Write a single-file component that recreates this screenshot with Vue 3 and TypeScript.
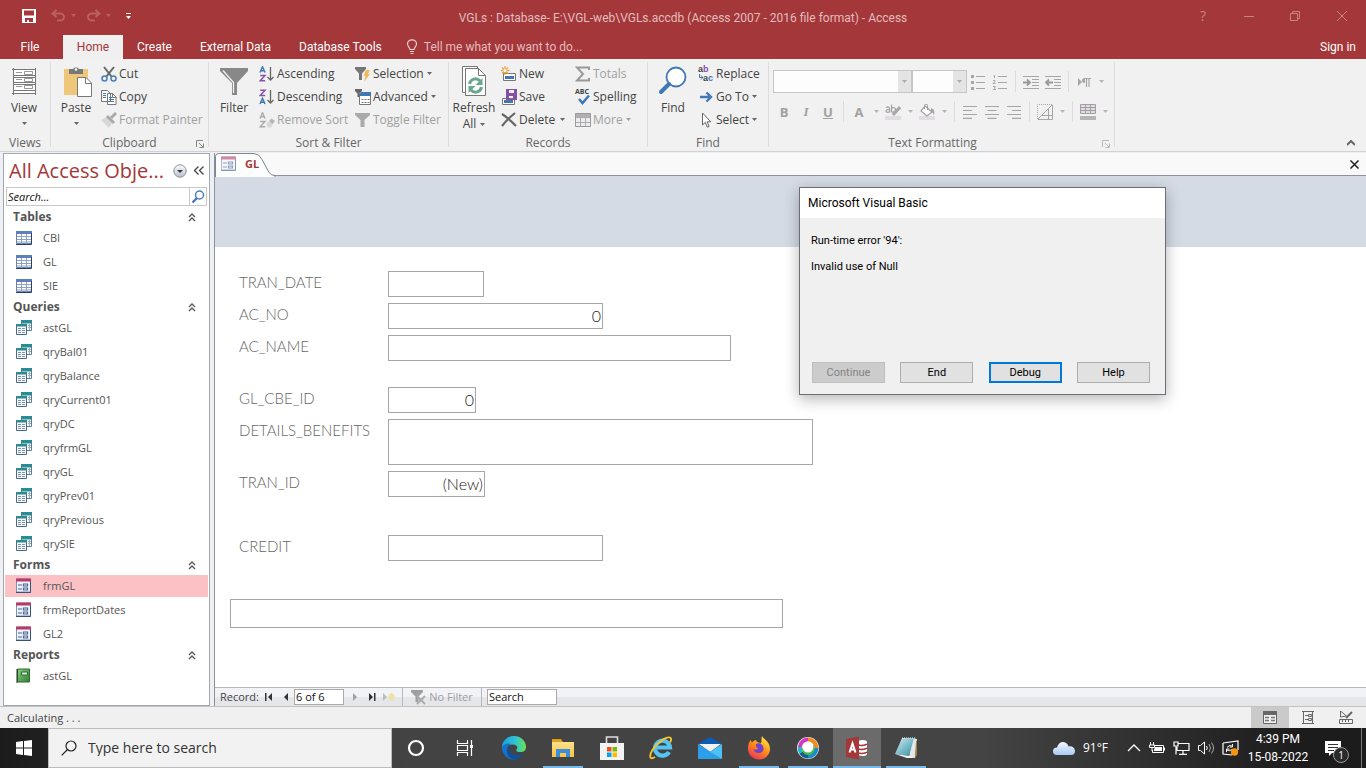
<script setup lang="ts">
interface NavGroup {
  title: string
  icon: string
  items: string[]
}

interface Field {
  id: string
  label: string
  value: string
  size: string
  multiline?: boolean
}

interface TaskItem {
  icon: string
  name: string
  running?: boolean
  active?: boolean
}

const tabs: string[] = ['Create', 'External Data', 'Database Tools']

const navGroups: NavGroup[] = [
  { title: 'Tables', icon: 'nav-table', items: ['CBI', 'GL', 'SIE'] },
  {
    title: 'Queries',
    icon: 'nav-query',
    items: ['astGL', 'qryBal01', 'qryBalance', 'qryCurrent01', 'qryDC', 'qryfrmGL', 'qryGL', 'qryPrev01', 'qryPrevious', 'qrySIE'],
  },
  { title: 'Forms', icon: 'nav-form', items: ['frmGL', 'frmReportDates', 'GL2'] },
  { title: 'Reports', icon: 'nav-report', items: ['astGL'] },
]

const fields: Field[] = [
  { id: 'tran-date', label: 'TRAN_DATE', value: '', size: 'date' },
  { id: 'ac-no', label: 'AC_NO', value: '0', size: 'number' },
  { id: 'ac-name', label: 'AC_NAME', value: '', size: 'name' },
  { id: 'gl-cbe-id', label: 'GL_CBE_ID', value: '0', size: 'short' },
  { id: 'details', label: 'DETAILS_BENEFITS', value: '', size: 'memo', multiline: true },
  { id: 'tran-id', label: 'TRAN_ID', value: '(New)', size: 'auto' },
  { id: 'credit', label: 'CREDIT', value: '', size: 'credit' },
]

const taskItems: TaskItem[] = [
  { icon: 'cortana', name: 'Cortana' },
  { icon: 'taskview', name: 'Task View' },
  { icon: 'edge', name: 'Edge' },
  { icon: 'explorer', name: 'File Explorer', running: true },
  { icon: 'store', name: 'Store' },
  { icon: 'ie', name: 'Internet Explorer' },
  { icon: 'mail', name: 'Mail' },
  { icon: 'firefox', name: 'Firefox', running: true },
  { icon: 'webex', name: 'Webex', running: true },
  { icon: 'access', name: 'Access', running: true, active: true },
  { icon: 'notepad', name: 'Notepad', running: true },
]

const isSelected = (group: string, item: string): boolean => group === 'Forms' && item === 'frmGL'
</script>

<template>
  <div class="window">
    <svg class="sprite" aria-hidden="true">
      <defs>
        <linearGradient id="g-edge" x1="0" y1="0" x2="1" y2="0">
          <stop offset="0" stop-color="#1b9de2" /><stop offset="0.55" stop-color="#2fc3d8" /><stop offset="1" stop-color="#6be24a" />
        </linearGradient>
        <linearGradient id="g-fox" x1="0.8" y1="0" x2="0.2" y2="1">
          <stop offset="0" stop-color="#fff04a" /><stop offset="0.5" stop-color="#ff8a16" /><stop offset="1" stop-color="#e9305c" />
        </linearGradient>
        <linearGradient id="g-folder" x1="0" y1="0" x2="0" y2="1">
          <stop offset="0" stop-color="#ffe08a" /><stop offset="1" stop-color="#f7c342" />
        </linearGradient>
        <linearGradient id="g-pad" x1="0" y1="0" x2="1" y2="1">
          <stop offset="0" stop-color="#d4eef3" /><stop offset="1" stop-color="#2f8ea3" />
        </linearGradient>
        <linearGradient id="g-cloud" x1="0" y1="0" x2="0" y2="1">
          <stop offset="0" stop-color="#f3f8ff" /><stop offset="1" stop-color="#a9c9f5" />
        </linearGradient>
        <linearGradient id="g-ball" x1="0" y1="0" x2="0" y2="1">
          <stop offset="0" stop-color="#ffffff" /><stop offset="1" stop-color="#b9bec8" />
        </linearGradient>
        <linearGradient id="g-report" x1="0" y1="0" x2="1" y2="1">
          <stop offset="0" stop-color="#8ccf84" /><stop offset="1" stop-color="#2f7d33" />
        </linearGradient>
      </defs>
      <symbol id="arrow" viewBox="0 0 5 3"><path d="M0 0h5L2.500 3z" fill="currentColor" /></symbol>
      <symbol id="launcher" viewBox="0 0 8 8"><path d="M.5 7V.5H7M3 3l4 4M7.500 3.500v4h-4" fill="none" stroke="currentColor" /></symbol>
      <symbol id="save-title" viewBox="0 0 14 14"><path fill="#fff" fill-rule="evenodd" d="M0 0h14v14H0zM2 1.500v5h10v-5zM3 9v4h2v-2h2v2h4V9z" /></symbol>
      <symbol id="undo" viewBox="0 0 15 13"><path d="M5.500 1 1.500 4.500l4 3.500M2 4.500h7a4 3.500 0 0 1 0 7H6" fill="none" stroke="#bd5f61" stroke-width="2" /></symbol>
      <symbol id="bulb" viewBox="0 0 12 16"><path d="M4 10.500C4 8.500 1.500 7.500 1.500 5a4.500 4.200 0 0 1 9 0c0 2.500-2.500 3.500-2.500 5.500zM4 12.500h4M4.500 14.500h3" fill="none" stroke="#eccfd0" stroke-width="1.200" /></symbol>

      <symbol id="view" viewBox="0 0 32 32">
        <path fill="#fff" d="M5 4h22v24H5z" /><path fill="none" stroke="#777" d="M4 4.500h24M5 10.500h23M5 12.500h23M5 17.500h23M5 19.500h23M5 25.500h23M4 28.500h24M5.500 3v27M27.500 3v27" />
        <path fill="none" stroke="#999" d="M8 7.500h6M8 14.500h6M8 21.500h6M16.500 6.500h8v3h-8zM16.500 13.500h8v3h-8zM16.500 20.500h8v3h-8z" />
      </symbol>
      <symbol id="paste" viewBox="0 0 32 32">
        <path fill="#efc77b" d="M4 4h24v26H4z" /><path fill="#777" d="M9 4h4a3.500 3 0 0 1 6 0h4v5H9z" /><circle cx="16" cy="4.500" r="1.300" fill="#fff" />
        <path fill="#fff" stroke="#777" d="M17.500 12.500h8.500l5.500 5.500v13.500h-14z" /><path fill="none" stroke="#777" d="M25.500 12.500v6h6" />
      </symbol>
      <symbol id="cut" viewBox="0 0 16 16">
        <path d="M3 1l7.500 9.500M13 1 5.500 10.500" stroke="#666" stroke-width="2" fill="none" /><circle cx="3.500" cy="12.500" r="2.500" fill="none" stroke="#4a7fb5" stroke-width="1.500" /><circle cx="12.500" cy="12.500" r="2.500" fill="none" stroke="#4a7fb5" stroke-width="1.500" />
      </symbol>
      <symbol id="copy" viewBox="0 0 16 16">
        <path fill="#fff" stroke="#777" d="M.5 1.500h6l3 3v8h-9zM6.500 4.500h5l3.500 3.500v7.500H6.500z" /><path stroke="#3f78b5" d="M2 4.500h3M2 6.500h3M2 8.500h3M8 8.500h3M8 10.500h5M8 12.500h5" /><path d="M11.500 4.500v4h4" fill="none" stroke="#777" />
      </symbol>
      <symbol id="painter" viewBox="0 0 16 16">
        <path fill="#d9d6d9" d="M0 8l6-3 5 6-3 5z" /><path fill="#aaa" d="M5 5l2-2 7 7-2 2z" /><path d="M10 6l5-5" stroke="#aaa" stroke-width="3" />
      </symbol>
      <symbol id="filter" viewBox="0 0 32 32">
        <path fill="#888" d="M2 3h28v3L19 18v12h-5V18L2 6z" /><path fill="none" stroke="#f5f5f5" stroke-width="1.200" d="M5 5.500l10.500 12V28" />
      </symbol>
      <symbol id="asc" viewBox="0 0 16 16">
        <path fill="none" stroke="#3f78b5" stroke-width="1.500" d="M1 6.500 3.500.8 6 6.500M2 4.800h3" /><path fill="none" stroke="#8c50ad" stroke-width="1.500" d="M1.200 9.500H6l-4.800 5.300h5" /><path fill="none" stroke="#666" stroke-width="1.300" d="M11.500 1v13M8.500 11l3 3 3-3" />
      </symbol>
      <symbol id="desc" viewBox="0 0 16 16">
        <path fill="none" stroke="#8c50ad" stroke-width="1.500" d="M1.200 1.200H6L1.200 6.500h5" /><path fill="none" stroke="#3f78b5" stroke-width="1.500" d="M1 15l2.500-5.700L6 15M2 13.200h3" /><path fill="none" stroke="#666" stroke-width="1.300" d="M11.500 1v13M8.500 11l3 3 3-3" />
      </symbol>
      <symbol id="unsort" viewBox="0 0 16 16">
        <path fill="none" stroke="#aaa" stroke-width="1.400" d="M1 6.500 3.500.8 6 6.500M2 4.800h3M1.200 9.500H6l-4.800 5.300h5" /><path fill="#d9d6d9" d="M7 12l3-3 4 3.500-2.500 3H9z" /><path fill="#b5b5b5" d="M10 9l2.500-2.500L16 9l-2.500 3z" />
      </symbol>
      <symbol id="selection" viewBox="0 0 16 16">
        <path fill="#777" d="M0 1h11v2L7 7.500V14H4V7.500L0 3z" /><path fill="#efb95d" d="M11 4h4l-2 4h2l-6 8 1.500-6H8.500z" />
      </symbol>
      <symbol id="advanced" viewBox="0 0 16 16">
        <path fill="#fff" stroke="#777" d="M4.500 5.500h11v10h-11z" /><path fill="#3f78b5" d="M6 3h10v4H4V6z" /><path fill="#666" d="M0 0h7v2L4.500 4.500V8h-2V4.500L0 2z" /><path stroke="#777" stroke-dasharray="2 1" d="M6.500 10.500h8M6.500 13.500h8" />
      </symbol>
      <symbol id="toggle" viewBox="0 0 16 16"><path fill="#aaa" d="M0 1h15v2L9.500 8v7h-4V8L0 3z" /></symbol>
      <symbol id="refresh" viewBox="0 0 32 32">
        <path fill="#fff" stroke="#777" d="M4.500 1.500h15v26h-15z" /><path fill="#fff" stroke="#777" d="M7.500 3.500h13l7 7v20h-20z" /><path fill="none" stroke="#777" d="M20.500 3.500v7h7" />
        <path fill="none" stroke="#68a78e" stroke-width="3" d="M11.500 19a6 6 0 0 1 10.500-3M23.500 22a6 6 0 0 1-10.500 3" /><path fill="#68a78e" d="M24.500 13v7h-7zM10.500 28v-7h7z" />
      </symbol>
      <symbol id="new" viewBox="0 0 16 16">
        <path fill="#fff" stroke="#777" d="M2.500 7.500h12v7h-12z" /><path fill="#3f78b5" d="M4 10h9v3H4z" /><path stroke="#e9a94a" stroke-width="1.300" d="M4 0v9M-.5 4.500h9M1 1.500l6 6M7 1.500l-6 6" /><circle cx="4" cy="4.500" r="1.500" fill="#fff" />
      </symbol>
      <symbol id="save" viewBox="0 0 16 16">
        <path fill="#fff" stroke="#777" d="M1.500 9.500h12v6h-12z" /><path fill="#3f78b5" d="M3 11h9v3H3z" /><path fill="#8650a8" fill-rule="evenodd" d="M5 0h11v11H5zM8 1v3h5V1zM8 7v3h4V7z" />
      </symbol>
      <symbol id="delete" viewBox="0 0 16 16"><path d="M1 2c5 3 9 7 14 12M14 1C9 5 5 9 1 14" fill="none" stroke="#666" stroke-width="2.200" /></symbol>
      <symbol id="totals" viewBox="0 0 16 16"><path d="M14 4V1.500H2L8 8l-6 6.500h12V12" fill="none" stroke="#999" stroke-width="2" /></symbol>
      <symbol id="check" viewBox="0 0 16 16"><path d="M4 10l3.500 4L14 6.500" fill="none" stroke="#3f78b5" stroke-width="2.500" /></symbol>
      <symbol id="more" viewBox="0 0 16 16"><path fill="#ececec" stroke="#999" d="M.5 1.500h15v13H.5z" /><path fill="#b5aeb5" d="M1 2h14v3H1z" /><path fill="none" stroke="#b0a9b0" d="M1 5.500h14M1 10.500h14M5.500 2v12M10.500 2v12" /></symbol>
      <symbol id="find" viewBox="0 0 32 32"><circle cx="19" cy="12" r="9.500" fill="#fff" stroke="#3f78b5" stroke-width="1.800" /><path d="M12 19 4 27" stroke="#3f78b5" stroke-width="4" stroke-linecap="round" /></symbol>
      <symbol id="goto" viewBox="0 0 16 16"><path fill="none" stroke="#3f78b5" stroke-width="2.400" d="M2 8h10M8.500 3.500 13 8l-4.500 4.500" /></symbol>
      <symbol id="select" viewBox="0 0 16 16"><path fill="#fff" stroke="#666" d="M4.500 1v12l2.800-2.600 2 4.800 1.800-.8-2-4.600h3.700z" /></symbol>
      <symbol id="turn" viewBox="0 0 4 6"><path fill="none" stroke="#3f78b5" d="M.5 0v3.500H4M2 1.500l2 2-2 2" /></symbol>
      <symbol id="bullets" viewBox="0 0 16 16"><path stroke="#a6a6a6" stroke-width="1.200" d="M6 2.500h9M6 8.500h9M6 14.500h9" /><path fill="#a6a6a6" d="M1 1h3v3H1zM1 7h3v3H1zM1 13h3v3H1z" /></symbol>
      <symbol id="numbers" viewBox="0 0 16 16"><path fill="none" stroke="#a6a6a6" d="M6 2.500h9M6 8.500h9M6 14.500h9M1.500 1.500h1V4M1 6.500h2v1l-2 2h2.500M1 12.500h2.500l-1 1.500 1 1.500H1" /></symbol>
      <symbol id="indent" viewBox="0 0 16 16"><path stroke="#a6a6a6" d="M0 2.500h16M9 5.500h7M9 8.500h7M9 11.500h7M0 14.500h16" /><path fill="none" stroke="#999" stroke-width="1.800" d="M0 8.500h6M4 5.500l3 3-3 3" /></symbol>
      <symbol id="outdent" viewBox="0 0 16 16"><path stroke="#a6a6a6" d="M0 2.500h16M9 5.500h7M9 8.500h7M9 11.500h7M0 14.500h16" /><path fill="none" stroke="#999" stroke-width="1.800" d="M8 8.500H2M4 5.500l-3 3 3 3" /></symbol>
      <symbol id="para" viewBox="0 0 16 16"><path fill="#a6a6a6" d="M2 4l4 4-4 4zM9 9a3 2.500 0 0 1 0-5h6v1H9z" /><path stroke="#a6a6a6" stroke-width="1.200" d="M10.500 4v9M13 4v9" /></symbol>
      <symbol id="highlight" viewBox="0 0 16 16"><path fill="#e3dbe3" d="M0 12h16v4H0z" /><path fill="none" stroke="#a0a0a0" stroke-width="1.200" d="M1 3.500c2-1 3.500-.5 3.500 1v3.500c-1.500.5-3.500.5-3.500-1s2-1.500 3.500-1.500M6.500.5v7.500c3 .5 4-1 4-2.500s-2-2.500-4-1.500" /><path stroke="#a6a6a6" stroke-width="3" d="M15 3 8 11" /></symbol>
      <symbol id="fill" viewBox="0 0 16 16"><path fill="#e3dbe3" d="M0 12h16v4H0z" /><path fill="#fff" stroke="#a0a0a0" stroke-width="1.200" d="M6 2l7 6-5 4-6-5z" /><path fill="none" stroke="#a0a0a0" d="M5.500 5V1.500a1.500 1.500 0 0 1 3 0V6" /><path fill="#a6a6a6" d="M12 4c3 1 4 3 3 7-1-2-2-3-3-3z" /></symbol>
      <symbol id="left" viewBox="0 0 16 14"><path stroke="#a6a6a6" stroke-width="1.200" d="M1 1.500h14M1 5.500h9M1 9.500h14M1 13.300h9" /></symbol>
      <symbol id="center" viewBox="0 0 16 14"><path stroke="#a6a6a6" stroke-width="1.200" d="M1 1.500h14M3.500 5.500h9M1 9.500h14M3.500 13.300h9" /></symbol>
      <symbol id="right" viewBox="0 0 16 14"><path stroke="#a6a6a6" stroke-width="1.200" d="M1 1.500h14M6 5.500h9M1 9.500h14M6 13.300h9" /></symbol>
      <symbol id="gridlines" viewBox="0 0 16 16"><path fill="none" stroke="#a6a6a6" d="M1 15.500h14.500V1M1 15 15 1M11.500 5v10M5 11.500h10" /><path fill="none" stroke="#a6a6a6" stroke-dasharray="1 1" d="M.5 15V.5H15" /></symbol>
      <symbol id="rows" viewBox="0 0 16 16"><path fill="#e3dbe3" stroke="#a0a0a0" d="M.5.5h15v9H.5z" /><path stroke="#a0a0a0" d="M1 3.500h14M1 6.500h14M5.500 1v8M10.500 1v8" /><path fill="#b5b5b5" d="M0 12h16v4H0z" /></symbol>

      <symbol id="nav-table" viewBox="0 0 16 14"><path fill="#fff" stroke="#6d83a8" d="M.5.5h15v12H.5z" /><path fill="#5c7fc0" d="M0 0h16v3H0z" /><path stroke="#8ea2c2" d="M1 5.500h14M1 8.500h14M1 11h14M5.500 3v10M10.500 3v10" /><path fill="none" stroke="#2b4166" d="M0 13.500h15.500V2" /></symbol>
      <symbol id="nav-query" viewBox="0 0 16 16"><path fill="#fff" stroke="#5c7f96" d="M5.500.5h10v10h-10z" /><path fill="#2a8b91" d="M5 0h11v3.500H5z" /><path stroke="#9db2c8" d="M12 5.500h3M12 7.500h3M13.500 4v6" /><path fill="#f6fafd" stroke="#49697f" d="M.5 4.500h10v10H.5z" /><path fill="#2a8b91" d="M0 4h11v2.500H0z" /><path stroke="#7e96b5" stroke-dasharray="3 1" d="M2 8.500h8M2 10.500h8M2 12.500h8" /></symbol>
      <symbol id="nav-form" viewBox="0 0 16 15"><path fill="#edf2fb" stroke="#7d8fb5" d="M.5.500h14v13H.5z" /><path fill="#b83a68" d="M0 0h15v3H0z" /><path fill="none" stroke="#4d6594" stroke-width="1.200" d="M2 6.500h4M2 10.500h4M7.500 5.500h4v2h-4zM7.500 9.500h4v2h-4z" /><path fill="none" stroke="#38517d" d="M0 14h14.500V3" /></symbol>
      <symbol id="nav-report" viewBox="0 0 16 15"><path fill="url(#g-report)" stroke="#2c6b30" d="M1.500.5h12v13h-12z" /><path stroke="#1d3320" stroke-width="2" stroke-dasharray="1 1" d="M1 1v13" /><path fill="#d7efd2" stroke="#2c6b30" d="M5.500 3.500h6v3h-6z" /></symbol>
      <symbol id="chevrons-up" viewBox="0 0 8 9"><path fill="none" stroke="#555" stroke-width="1.300" d="M1 4l3-3 3 3M1 8l3-3 3 3" /></symbol>
      <symbol id="magnify" viewBox="0 0 14 14"><circle cx="8.500" cy="5" r="4" fill="#fff" stroke="#4a7fc0" stroke-width="1.500" /><path d="M6 8 1.500 12.500" stroke="#3f6fb0" stroke-width="2.200" /></symbol>
      <symbol id="first" viewBox="0 0 8 8"><path fill="currentColor" d="M0 0h1.500v8H0zM7 0v8L3 4z" /></symbol>
      <symbol id="prev" viewBox="0 0 8 8"><path fill="currentColor" d="M6 0v8L2 4z" /></symbol>
      <symbol id="next" viewBox="0 0 8 8"><path fill="currentColor" d="M2 0v8l4-4z" /></symbol>
      <symbol id="last" viewBox="0 0 8 8"><path fill="currentColor" d="M6 0h1.500v8H6zM1 0v8l4-4z" /></symbol>
      <symbol id="newrec" viewBox="0 0 12 8"><path fill="#bbb" d="M0 0v8l4-4z" /><path stroke="#efdfa5" stroke-width="1.500" d="M5 4h7M8.500 0v8M6 1l5 6M11 1 6 7" /></symbol>
      <symbol id="nofilter" viewBox="0 0 16 16"><path fill="#a0a0a0" d="M0 1h12v2L7.500 7.500V13h-3V7.500L0 3z" /><path stroke="#aaa" stroke-width="1.800" d="M6 7l8 8M14 7l-8 8" /></symbol>
      <symbol id="formview" viewBox="0 0 14 13"><path fill="#eee" stroke="#666" d="M.5.5h13v12H.5z" /><path fill="#666" d="M0 0h14v4H0z" /><path stroke="#777" stroke-width="1.500" d="M2 6.500h4M2 9.500h4M8 6.500h4M8 9.500h4" /></symbol>
      <symbol id="layoutview" viewBox="0 0 14 13"><path fill="none" stroke="#666" d="M1 .5h12M1 12.500h12M2.500 0v13M11.500 0v13M4 4.500h3M4 8.500h3M7.500 3.500h3v2h-3zM7.500 7.500h3v2h-3z" /></symbol>
      <symbol id="designview" viewBox="0 0 14 13"><path fill="none" stroke="#666" d="M1.500 0v6l6-1zM.5 8.500h13v4H.5zM3.500 9v2M6.500 9v2M9.500 9v2" /><path stroke="#666" stroke-width="2" d="M13 1 7 7" /></symbol>

      <symbol id="windows" viewBox="0 0 16 16"><path fill="#fff" d="M0 2l7-1v6.500H0zM8 .9 16 0v7.500H8zM0 8.500h7V15l-7-1zM8 8.500h8V16l-8-1z" /></symbol>
      <symbol id="search" viewBox="0 0 16 16"><circle cx="10" cy="6" r="5" fill="none" stroke="#222" stroke-width="1.200" /><path d="M6.500 9.500.7 15.300" stroke="#222" stroke-width="1.200" /></symbol>
      <symbol id="cortana" viewBox="0 0 24 24"><circle cx="12" cy="12" r="7" fill="none" stroke="#fff" stroke-width="2.200" /></symbol>
      <symbol id="taskview" viewBox="0 0 24 24"><path fill="none" stroke="#fff" stroke-width="1.200" d="M4.500 4v3.500h10V4M4.500 20v-3.500h10V20M4.500 9.500h10v5h-10zM18.500 4v5M18.500 12v8" /><path fill="#fff" d="M17 9h3v3h-3z" /></symbol>
      <symbol id="edge" viewBox="0 0 24 24"><path fill="url(#g-edge)" d="M0 11a12 11 0 0 1 24 0c0 4-3 5.500-7 5-2.500-.3-3.500-1.500-2-3.500 1-1.500-.5-4-4-4C6 8.500 2 10 0 13z" /><path fill="#1672c8" d="M0 12c1-4 5-5.500 9-4-3 1-4 3.500-4 6 0 4 4 8 9 9.500A12 12 0 0 1 0 12z" /><path fill="#0f4f9c" d="M8 10c-2 4 0 9 6 9 3 0 5-.8 7-1.700-2 4-6 6.700-10 6.400C6 22 4 17 6 12z" /></symbol>
      <symbol id="explorer" viewBox="0 0 24 24"><path fill="#d99a15" d="M1 3h9l2 3H1z" /><path fill="url(#g-folder)" d="M1 6h22v15H1z" /><path fill="#e5a823" d="M1 4h9v1.500H1z" /><path fill="#3b8edb" d="M5 13h14v8h-4v-4H9v4H5z" /></symbol>
      <symbol id="store" viewBox="0 0 24 24"><path fill="none" stroke="#ddd" stroke-width="1.600" d="M6.500 7V1h11v6" /><path fill="#f3f3f3" d="M0 7h24v17H0z" /><path fill="#f25022" d="M7 11h4.500v4.500H7z" /><path fill="#7fba00" d="M12.500 11H17v4.500h-4.500z" /><path fill="#00a4ef" d="M7 16.500h4.500V21H7z" /><path fill="#ffb900" d="M12.500 16.500H17V21h-4.500z" /></symbol>
      <symbol id="ie" viewBox="0 0 24 24"><path fill="none" stroke="#56c4f2" stroke-width="4.200" d="M20 16a7.500 7.500 0 1 1 1-4.500H7" /><path fill="none" stroke="#f6c52a" stroke-width="1.800" d="M6 21C0 25 0 19 4 13C8 7 17 0 21 1.500c2 1 1 3.500 0 5" /></symbol>
      <symbol id="mail" viewBox="0 0 24 24"><path fill="#0a5cb4" d="M0 8l12-7 12 7z" /><path fill="#f1f1f1" d="M1 8h22l-11 8z" /><path fill="#2b9fe8" d="M0 8l24 15H0z" /><path fill="#4cc0f7" d="M24 8v15L12 16z" /></symbol>
      <symbol id="firefox" viewBox="0 0 24 24"><path fill="url(#g-fox)" d="M15 0c1 3 8 5 8 13a11 10.500 0 0 1-22 0c0-4 1-7 2.500-9L5 6.500C6 5 8 4 9 4c0 2 3 3 5 3 1-2 0-5 1-7z" /><path fill="#7242c8" d="M9 8c3-2 7 0 7.500 4 .5 3-2 5-5 5s-5-2-5-4c2 1 4 .5 5-1-2 0-3-2-2.500-4z" /></symbol>
      <symbol id="webex" viewBox="0 0 24 24"><circle cx="12" cy="12" r="11" fill="#e8e8e8" /><g fill="none" stroke-width="4"><path stroke="#f28a22" d="M12 3.500a8.500 8.500 0 0 1 8.500 8.500" /><path stroke="#168bd0" d="M20.500 12a8.500 8.500 0 0 1-8.500 8.500" /><path stroke="#165f8a" d="M12 20.500a8.500 8.500 0 0 1-7-4" /><path stroke="#19b8c4" d="M5 16.500a8 8 0 0 1-1-6" /><path stroke="#d934c4" d="M4 11a8 8 0 0 1 8-7.500" /></g><path fill="#46b84d" d="M6 12a6.500 6.500 0 1 0 12-3z" /><circle cx="12" cy="11" r="5.500" fill="#fff" /></symbol>
      <symbol id="access" viewBox="0 0 24 24"><path fill="#fff" d="M13 5c4-2 9-1 9 1v12c0 2-5 3-9 1z" /><path stroke="#a4373a" stroke-width="1.500" fill="none" d="M13 9c4 1 8 0 9-1M13 13c4 1 8 0 9-1M13 17c4 1 8 0 9-1" /><path fill="#a4373a" d="M1 3l13-2.500v23L1 21z" /><path fill="none" stroke="#fff" stroke-width="2" d="M4.500 16.500 7.500 7.500l3 9M5.500 13.500h4" /></symbol>
      <symbol id="notepad" viewBox="0 0 24 24"><path fill="#e4e7ea" d="M18 2l5 1-2 19-6-1z" /><path fill="#a8843a" d="M22 5l1 0v14l-2 3z" /><path fill="url(#g-pad)" d="M8 2h12l-5 18-14-2z" /><path fill="#f6f6f6" d="M1 18l14 2 6 2-8 0z" /><path stroke="#eee" stroke-dasharray="1 1" d="M8 2h13" /></symbol>
      <symbol id="cloud" viewBox="0 0 22 14"><path fill="url(#g-cloud)" d="M4 14a4 3.700 0 0 1 0-7.500C5 2 9 0 12 1.500c2 .8 3 2 3.500 4C19 4.500 22 7 22 10s-2 4-4 4z" /></symbol>
      <symbol id="up" viewBox="0 0 14 8"><path d="M1 7l6-6 6 6" fill="none" stroke="#fff" stroke-width="1.300" /></symbol>
      <symbol id="battery" viewBox="0 0 16 12"><path fill="none" stroke="#fff" d="M6 3.500h8.500v7H3.500V8M15.500 5.500v3M1.500 0v3M4.500 0v3M.5 3v2.500h5V3zM3 6v3" /><path fill="#fff" d="M6 5h7v4H5V7l1-1z" /></symbol>
      <symbol id="network" viewBox="0 0 17 14"><path fill="none" stroke="#fff" stroke-width="1.200" d="M5 2.500h11v7H4V6M10 10v3M6 13.300h8M1 1h4v4H1zM3 5v8.500" /></symbol>
      <symbol id="speaker" viewBox="0 0 16 14"><path fill="none" stroke="#fff" d="M.5 4.500h2L6.500 1v12l-4-3.500h-2zM8.500 5q1.500 2 0 4" /><path fill="none" stroke="#aaa" d="M11 3q3 4 0 8M13.500 1.500q4 5.500 0 11" /></symbol>
      <symbol id="update" viewBox="0 0 17 16"><path fill="none" stroke="#fff" stroke-width="1.200" d="M1 3 16 1v9M1 3v11l9 1" /><path fill="none" stroke="#fff" d="M5 7.500q2-3 5-1.500M10.500 4v3h-3M10 9.500q-2 2-5 .5M4.500 12V9h3" /><circle cx="12.500" cy="12" r="3.700" fill="#f7930f" /></symbol>
      <symbol id="notify" viewBox="0 0 16 15"><path fill="#fff" d="M0 0h16v12H7l-3 3v-3H0z" /><path stroke="#333" d="M3 3.500h10M3 6.500h10M3 9.500h6" /></symbol>
    </svg>

    <header class="titlebar">
      <div class="quick">
        <button aria-label="Save file"><svg class="i14"><use href="#save-title" /></svg></button>
        <button class="dim" aria-label="Undo" disabled><svg class="undo"><use href="#undo" /></svg><svg class="arrow"><use href="#arrow" /></svg></button>
        <button class="dim" aria-label="Redo" disabled><svg class="undo flip"><use href="#undo" /></svg><svg class="arrow"><use href="#arrow" /></svg></button>
        <button class="customize" aria-label="Customize toolbar"><svg width="5" height="6" viewBox="0 0 5 6"><path fill="#fff" d="M0 0h5v1H0zM0 3h5L2.500 6z" /></svg></button>
      </div>
      <h1>VGLs : Database- E:\VGL-web\VGLs.accdb (Access 2007 - 2016 file format) - Access</h1>
      <div class="caption">
        <button>?</button>
        <button aria-label="Minimize"><svg viewBox="0 0 10 10"><path d="M0 5.500h10" /></svg></button>
        <button aria-label="Restore"><svg viewBox="0 0 10 10"><path d="M.5 2.500h7v7h-7zM2.500 2V.5h7v7H8" /></svg></button>
        <button aria-label="Close window"><svg viewBox="0 0 10 10"><path d="M0 0l10 10M10 0 0 10" /></svg></button>
      </div>
    </header>

    <nav class="tabs">
      <button class="file">File</button>
      <button class="active">Home</button>
      <button v-for="tab in tabs" :key="tab">{{ tab }}</button>
      <button class="tell"><svg class="bulb"><use href="#bulb" /></svg>Tell me what you want to do...</button>
      <button class="signin">Sign in</button>
    </nav>

    <section class="ribbon">
      <div class="group views">
        <div class="body"><button class="big"><svg><use href="#view" /></svg><span>View</span><svg class="arrow"><use href="#arrow" /></svg></button></div>
        <div class="caption-row">Views</div>
      </div>
      <div class="group clipboard">
        <div class="body">
          <button class="big"><svg><use href="#paste" /></svg><span>Paste</span><svg class="arrow"><use href="#arrow" /></svg></button>
          <div class="stack">
            <button><svg class="i16"><use href="#cut" /></svg>Cut</button>
            <button><svg class="i16"><use href="#copy" /></svg>Copy</button>
            <button disabled><svg class="i16"><use href="#painter" /></svg>Format Painter</button>
          </div>
        </div>
        <div class="caption-row">Clipboard<svg class="launcher"><use href="#launcher" /></svg></div>
      </div>
      <div class="group sort">
        <div class="body">
          <button class="big"><svg><use href="#filter" /></svg><span>Filter</span></button>
          <div class="stack first">
            <button><svg class="i16"><use href="#asc" /></svg>Ascending</button>
            <button><svg class="i16"><use href="#desc" /></svg>Descending</button>
            <button disabled><svg class="i16"><use href="#unsort" /></svg>Remove Sort</button>
          </div>
          <div class="stack">
            <button><svg class="i16"><use href="#selection" /></svg>Selection<svg class="arrow"><use href="#arrow" /></svg></button>
            <button><svg class="i16"><use href="#advanced" /></svg>Advanced<svg class="arrow"><use href="#arrow" /></svg></button>
            <button disabled><svg class="i16"><use href="#toggle" /></svg>Toggle Filter</button>
          </div>
        </div>
        <div class="caption-row">Sort &amp; Filter</div>
      </div>
      <div class="group records">
        <div class="body">
          <button class="big"><svg><use href="#refresh" /></svg><span>Refresh</span><span class="line2">All<svg class="arrow"><use href="#arrow" /></svg></span></button>
          <div class="stack first">
            <button><svg class="i16"><use href="#new" /></svg>New</button>
            <button><svg class="i16"><use href="#save" /></svg>Save</button>
            <button class="spread"><svg class="i16"><use href="#delete" /></svg>Delete<svg class="arrow"><use href="#arrow" /></svg></button>
          </div>
          <div class="stack">
            <button disabled><svg class="i16"><use href="#totals" /></svg>Totals</button>
            <button><span class="abc"><svg class="i16"><use href="#check" /></svg><i>ABC</i></span>Spelling</button>
            <button disabled><svg class="i16"><use href="#more" /></svg>More<svg class="arrow"><use href="#arrow" /></svg></button>
          </div>
        </div>
        <div class="caption-row">Records</div>
      </div>
      <div class="group find">
        <div class="body">
          <button class="big"><svg><use href="#find" /></svg><span>Find</span></button>
          <div class="stack">
            <button><span class="abac"><i>a<b>b</b></i><i class="second"><svg width="4" height="6"><use href="#turn" /></svg>a<b class="blue">c</b></i></span>Replace</button>
            <button><svg class="i16"><use href="#goto" /></svg>Go To<svg class="arrow"><use href="#arrow" /></svg></button>
            <button><svg class="i16"><use href="#select" /></svg>Select<svg class="arrow"><use href="#arrow" /></svg></button>
          </div>
        </div>
        <div class="caption-row">Find</div>
      </div>
      <div class="group text">
        <div class="format">
          <div class="frow">
            <span class="combo wide"><select aria-label="Font" disabled></select><svg class="arrow"><use href="#arrow" /></svg></span>
            <span class="combo"><select aria-label="Font size" disabled></select><svg class="arrow"><use href="#arrow" /></svg></span>
            <button class="sq" disabled aria-label="Bullets"><svg class="i16"><use href="#bullets" /></svg></button>
            <button class="sq" disabled aria-label="Numbering"><svg class="i16"><use href="#numbers" /></svg></button>
            <span class="sep"></span>
            <button class="sq" disabled aria-label="Increase indent"><svg class="i16"><use href="#indent" /></svg></button>
            <button class="sq" disabled aria-label="Decrease indent"><svg class="i16"><use href="#outdent" /></svg></button>
            <span class="sep"></span>
            <button class="drop" disabled aria-label="Direction"><svg class="i16"><use href="#para" /></svg><svg class="arrow"><use href="#arrow" /></svg></button>
          </div>
          <div class="frow">
            <button class="sq letter" disabled>B</button>
            <button class="sq letter ital" disabled>I</button>
            <button class="sq letter under" disabled>U</button>
            <span class="sep"></span>
            <button class="drop letter" disabled><span class="glyph">A</span><svg class="arrow"><use href="#arrow" /></svg></button>
            <button class="drop" disabled aria-label="Highlight"><svg class="i16"><use href="#highlight" /></svg><svg class="arrow"><use href="#arrow" /></svg></button>
            <button class="drop" disabled aria-label="Fill"><svg class="i16"><use href="#fill" /></svg><svg class="arrow"><use href="#arrow" /></svg></button>
            <span class="sep"></span>
            <button class="sq" disabled aria-label="Align left"><svg class="align"><use href="#left" /></svg></button>
            <button class="sq" disabled aria-label="Center"><svg class="align"><use href="#center" /></svg></button>
            <button class="sq" disabled aria-label="Align right"><svg class="align"><use href="#right" /></svg></button>
            <span class="sep"></span>
            <button class="drop" disabled aria-label="Gridlines"><svg class="i16"><use href="#gridlines" /></svg><svg class="arrow"><use href="#arrow" /></svg></button>
            <span class="sep"></span>
            <button class="drop" disabled aria-label="Row colour"><svg class="i16"><use href="#rows" /></svg><svg class="arrow"><use href="#arrow" /></svg></button>
          </div>
        </div>
        <div class="caption-row text-caption">Text Formatting<svg class="launcher faint"><use href="#launcher" /></svg></div>
      </div>
      <button class="collapse" aria-label="Collapse ribbon"><svg width="8" height="6" viewBox="0 0 8 6"><path d="M0 5l4-4 4 4" fill="none" stroke="#666" stroke-width="2" /></svg></button>
    </section>

    <main class="workspace">
      <aside class="navpane">
        <div class="navhead">
          <h2>All Access Obje...</h2>
          <button aria-label="Choose category"><svg width="14" height="14" viewBox="0 0 14 14"><circle cx="7" cy="7" r="6.200" fill="url(#g-ball)" stroke="#8a8f9a" /><path d="M4 6h6L7 9z" fill="#334" /></svg></button>
          <button aria-label="Collapse pane"><svg width="10" height="9" viewBox="0 0 10 9"><path d="M4.500.5l-4 4 4 4M9.500.5l-4 4 4 4" fill="none" stroke="#444" stroke-width="1.300" /></svg></button>
        </div>
        <div class="navsearch">
          <input type="text" placeholder="Search..." aria-label="Search objects" />
          <button aria-label="Search"><svg class="i14"><use href="#magnify" /></svg></button>
        </div>
        <section v-for="group in navGroups" :key="group.title">
          <h3>{{ group.title }}<svg class="chev"><use href="#chevrons-up" /></svg></h3>
          <ul>
            <li v-for="item in group.items" :key="item" :class="{ selected: isSelected(group.title, item) }">
              <svg class="i16"><use :href="'#' + group.icon" /></svg>{{ item }}
            </li>
          </ul>
        </section>
      </aside>

      <section class="document">
        <div class="doctabs">
          <div class="doctab">
            <svg class="shape" width="62" height="24" viewBox="0 0 62 24"><path fill="#fdfdfd" stroke="#7f868f" d="M.5 24V3.500q0-3 3-3H39q5 0 8 6l7 13q2 3 6 3V24" /></svg>
            <svg class="i16 pale"><use href="#nav-form" /></svg><span>GL</span>
          </div>
          <button class="docclose" aria-label="Close form"><svg width="9" height="9" viewBox="0 0 9 9"><path d="M.5.5l8 8M8.500.5l-8 8" stroke="#222" stroke-width="1.500" /></svg></button>
        </div>
        <div class="band"></div>
        <form class="detail">
          <div v-for="f in fields" :key="f.id" class="field" :class="f.size">
            <label :for="f.id">{{ f.label }}</label>
            <textarea v-if="f.multiline" :id="f.id"></textarea>
            <input v-else :id="f.id" type="text" :value="f.value" />
          </div>
          <input class="footer-box" type="text" aria-label="Remarks" />
        </form>
        <footer class="recordnav">
          <span class="rec">Record:</span>
          <button class="nb" aria-label="First record"><svg><use href="#first" /></svg></button>
          <button class="nb" aria-label="Previous record"><svg><use href="#prev" /></svg></button>
          <input type="text" value="6 of 6" aria-label="Current record" class="pos" />
          <button class="nb off" aria-label="Next record" disabled><svg><use href="#next" /></svg></button>
          <button class="nb" aria-label="Last record"><svg><use href="#last" /></svg></button>
          <button class="nb new" aria-label="New record" disabled><svg><use href="#newrec" /></svg></button>
          <button class="nofilter" disabled><svg class="i16"><use href="#nofilter" /></svg>No Filter</button>
          <input type="text" value="Search" aria-label="Search records" class="find-box" />
        </footer>
      </section>
    </main>

    <div class="status">
      <span>Calculating . . .</span>
      <div class="viewbtns">
        <button class="on" aria-label="Form view"><svg><use href="#formview" /></svg></button>
        <button aria-label="Layout view"><svg><use href="#layoutview" /></svg></button>
        <button aria-label="Design view"><svg><use href="#designview" /></svg></button>
      </div>
    </div>

    <footer class="taskbar">
      <button class="start" aria-label="Start"><svg class="i16"><use href="#windows" /></svg></button>
      <label class="search"><svg class="i16"><use href="#search" /></svg><input type="text" placeholder="Type here to search" aria-label="Type here to search" /></label>
      <div class="apps">
        <button v-for="t in taskItems" :key="t.icon" :class="{ running: t.running, active: t.active }" :aria-label="t.name"><svg><use :href="'#' + t.icon" /></svg></button>
      </div>
      <div class="tray">
        <svg width="22" height="14"><use href="#cloud" /></svg>
        <span class="temp">91°F</span>
        <svg width="14" height="8"><use href="#up" /></svg>
        <svg width="16" height="12"><use href="#battery" /></svg>
        <svg width="17" height="14"><use href="#network" /></svg>
        <svg width="16" height="14"><use href="#speaker" /></svg>
        <svg width="17" height="16"><use href="#update" /></svg>
        <div class="clock"><span>4:39 PM</span><span>15-08-2022</span></div>
        <button class="notify" aria-label="Notifications"><svg width="16" height="15"><use href="#notify" /></svg><span class="badge">1</span></button>
        <span class="peek"></span>
      </div>
    </footer>

    <div class="dialog" role="dialog" aria-labelledby="dlg-title">
      <h2 id="dlg-title">Microsoft Visual Basic</h2>
      <div class="dlg-body">
        <p>Run-time error '94':</p>
        <p>Invalid use of Null</p>
        <div class="dlg-actions">
          <button disabled>Continue</button>
          <button>End</button>
          <button class="default">Debug</button>
          <button>Help</button>
        </div>
      </div>
    </div>
  </div>
</template>

<style>
body {
  margin: 0;
}
</style>

<style scoped>
.window {
  position: relative;
  min-height: 100vh;
  display: flex;
  flex-direction: column;
  background: #f0f0f0;
  color: #444;
  font: 12px/16px "Open Sans", "Noto Sans", sans-serif;
}
.window * {
  box-sizing: border-box;
}
.sprite {
  position: absolute;
  width: 0;
  height: 0;
}
button {
  display: flex;
  align-items: center;
  justify-content: center;
  padding: 0;
  border: 0;
  background: none;
  color: inherit;
  font: inherit;
  white-space: nowrap;
}
input,
textarea,
select {
  font: inherit;
  border-radius: 0;
  outline: 0;
}
h1,
h2,
h3,
p,
ul {
  margin: 0;
  padding: 0;
  font-weight: 400;
}
svg {
  flex: none;
}
.i14 {
  width: 14px;
  height: 14px;
}
.i16 {
  width: 16px;
  height: 16px;
}
.arrow {
  width: 5px;
  height: 3px;
  color: #666;
}

/* title bar and ribbon tabs */
.titlebar {
  display: flex;
  justify-content: space-between;
  height: 35px;
  background: #a4373a;
  color: #e3bcbd;
  position: relative;
}
.quick {
  display: flex;
  align-items: center;
  gap: 15px;
  padding: 0 0 4px 22px;
}
.quick .dim {
  gap: 5px;
}
.quick .dim .arrow {
  color: #bd5f61;
}
.quick .dim + .dim {
  margin-left: -5px;
}
.undo {
  width: 15px;
  height: 13px;
}
.flip {
  transform: scaleX(-1);
}
h1 {
  position: absolute;
  inset: 0;
  text-align: center;
  font-family: Roboto, sans-serif;
  font-size: 12px;
  line-height: 36px;
  pointer-events: none;
}
.caption {
  display: flex;
  padding: 0 12px 4px 0;
}
.caption button {
  width: 46px;
  color: #c98385;
  font-size: 14px;
}
.caption button:last-child {
  width: 24px;
  margin-left: 12px;
}
.caption svg {
  width: 10px;
  height: 10px;
  fill: none;
  stroke: #c98385;
}
.tabs {
  display: flex;
  height: 24px;
  background: #a4373a;
  color: #fff;
  font-family: Roboto, sans-serif;
}
.tabs button {
  padding: 0 14px;
  font-size: 12px;
}
.tabs .file {
  width: 60px;
  margin-right: 3px;
}
.tabs .active {
  width: 60px;
  background: #f0f0f0;
  color: #a4373a;
}
.tabs .tell {
  padding: 0 10px;
  gap: 6px;
  color: #e3bcbd;
}
.bulb {
  width: 12px;
  height: 16px;
}
.tabs .signin {
  margin-left: auto;
  padding: 0 10px;
}

/* ribbon */
.ribbon {
  display: flex;
  height: 93px;
  padding-top: 3px;
  border-bottom: 1px solid #d2d2d2;
  background: #f1f1f1;
}
.group {
  display: flex;
  flex-direction: column;
  margin-bottom: 4px;
  border-right: 1px solid #dcdcdc;
}
.views {
  width: 51px;
}
.clipboard {
  width: 158px;
}
.sort {
  width: 240px;
}
.records {
  width: 199px;
}
.find {
  width: 121px;
}
.text {
  width: 346px;
}
.body {
  flex: none;
  display: flex;
  height: 73px;
}
.big {
  flex-direction: column;
  justify-content: flex-start;
  align-self: flex-start;
  width: 48px;
  padding-top: 3px;
}
.big > svg:first-child {
  width: 32px;
  height: 32px;
  margin-bottom: 3px;
}
.big > .arrow {
  margin-top: 6px;
}
.line2 {
  display: flex;
  align-items: center;
  gap: 4px;
}
.clipboard .big,
.sort .big,
.records .big,
.find .big {
  width: 50px;
}
.stack {
  display: flex;
  flex-direction: column;
}
.stack button {
  justify-content: flex-start;
  height: 23px;
  gap: 2px;
}
.stack .arrow {
  margin-left: 1px;
}
button:disabled,
button:disabled .arrow {
  color: #a0a0a0;
}
.sort .stack.first {
  width: 96px;
}
.records .stack {
  padding-left: 2px;
}
.records .stack.first {
  width: 74px;
}
.records .spread .arrow {
  margin-left: auto;
  margin-right: 8px;
}
.caption-row {
  flex: none;
  position: relative;
  text-align: center;
  color: #666;
}
.text-caption {
  padding-right: 18px;
}
.launcher {
  position: absolute;
  right: 4px;
  top: 5px;
  width: 8px;
  height: 8px;
  color: #888;
}
.faint {
  color: #bbb;
}
.abc,
.abac {
  position: relative;
  display: block;
  width: 16px;
  height: 16px;
}
.abc i,
.abac i {
  font-style: normal;
}
.abc i {
  position: absolute;
  left: 0;
  top: 0;
  font-size: 7px;
  font-weight: 700;
  line-height: 5px;
}
.abac {
  height: 18px;
  font: 600 9px/9px "Liberation Sans", sans-serif;
}
.abac i {
  display: flex;
}
.abac b {
  color: #8650a8;
}
.abac .second {
  padding-left: 1px;
}
.abac .blue {
  color: #3f78b5;
}
.format {
  flex: none;
  display: flex;
  flex-direction: column;
  height: 73px;
  padding: 8px 0 0 4px;
  gap: 7px;
}
.frow {
  display: flex;
  align-items: center;
  height: 23px;
}
.combo {
  position: relative;
  width: 55px;
  height: 23px;
}
.combo.wide {
  width: 139px;
}
.combo select {
  width: 100%;
  height: 100%;
  border: 1px solid #c6c6c6;
  background: linear-gradient(to left, #e4e4e4 13px, #fdfdfd 13px);
  appearance: none;
  opacity: 1;
}
.combo .arrow {
  position: absolute;
  right: 5px;
  top: 10px;
  color: #aaa;
}
.sq {
  width: 22px;
}
.drop {
  width: 34px;
  gap: 7px;
}
.drop:disabled .arrow {
  color: #b5b5b5;
}
.letter {
  font-size: 13px;
  font-weight: 700;
}
.glyph {
  width: 16px;
}
.ital {
  font-family: "Liberation Serif", serif;
  font-style: italic;
}
.under {
  text-decoration: underline;
}
.align {
  width: 16px;
  height: 14px;
}
.sep {
  width: 1px;
  height: 21px;
  margin: 0 4px;
  background: #dcdcdc;
}
.collapse {
  align-self: flex-end;
  margin: 0 11px 5px auto;
}

/* navigation pane */
.workspace {
  flex: 1;
  display: flex;
  gap: 4px;
  padding: 1px 0 0 3px;
  background: #eef0f3;
}
.navpane {
  width: 207px;
  border: 1px solid #a2a8b0;
  background: #fff;
}
.navhead {
  display: flex;
  align-items: center;
  height: 33px;
  padding: 0 5px;
  gap: 7px;
}
.navhead h2 {
  flex: 1;
  color: #a4373a;
  font-size: 20px;
  line-height: 32px;
  white-space: nowrap;
}
.navsearch {
  display: flex;
  height: 19px;
  margin: 0 2px 2px;
  border: 1px solid #c8c8c8;
}
.navsearch input {
  flex: 1;
  min-width: 0;
  padding: 0 1px;
  border: 0;
  font-size: 11px;
  font-style: italic;
}
.navsearch input::placeholder {
  color: #111;
}
.navsearch button {
  width: 17px;
  border-left: 1px solid #c8c8c8;
}
h3 {
  display: flex;
  align-items: center;
  justify-content: space-between;
  height: 18px;
  padding: 0 13px 0 9px;
  font-size: 12px;
  font-weight: 700;
  color: #555;
}
.chev {
  width: 8px;
  height: 9px;
}
ul {
  display: flex;
  flex-direction: column;
  gap: 2px;
  padding: 1px;
  list-style: none;
}
li {
  display: flex;
  align-items: center;
  gap: 11px;
  height: 22px;
  padding-left: 11px;
  font-size: 11px;
  color: #555;
}
li.selected {
  background: #fcc1c4;
}

/* document area */
.document {
  flex: 1;
  display: flex;
  flex-direction: column;
  min-width: 0;
  border-left: 1px solid #8b929b;
  background: #fff;
}
.doctabs {
  display: flex;
  justify-content: space-between;
  height: 23px;
  background: #f9f9f9;
  border-bottom: 1px solid #8b929b;
}
.doctab {
  position: relative;
  display: flex;
  align-items: center;
  gap: 8px;
  width: 62px;
  padding-left: 6px;
  color: #a4373a;
  font-size: 11px;
  font-weight: 700;
}
.doctab .shape {
  position: absolute;
  left: 0;
  top: 0;
}
.doctab span,
.pale {
  position: relative;
}
.pale {
  opacity: 0.6;
}
.docclose {
  width: 24px;
}
.band {
  height: 71px;
  background: #d5dbe5;
}
.detail {
  flex: 1;
  display: flex;
  flex-direction: column;
  align-items: flex-start;
  gap: 6px;
  padding: 24px 15px;
}
.field {
  display: flex;
  font: 300 16px/22px Lato, "Open Sans", sans-serif;
  color: #666;
}
.field label {
  width: 158px;
  padding-left: 9px;
  font-size: 15px;
}
.field input,
.field textarea,
.footer-box {
  height: 26px;
  padding: 0 1px 2px;
  border: 1px solid #a6a6a6;
  background: #fff;
  color: #222;
}
.field input {
  text-align: right;
}
.field textarea {
  display: block;
  width: 425px;
  height: 46px;
  resize: none;
}
.date input {
  width: 96px;
}
.number input,
.credit input {
  width: 215px;
}
.name input {
  width: 343px;
}
.short input {
  width: 88px;
}
.auto input {
  width: 97px;
}
.short {
  margin-top: 20px;
}
.credit {
  margin-top: 32px;
}
.footer-box {
  width: 553px;
  height: 29px;
  margin-top: 32px;
}
.recordnav {
  display: flex;
  align-items: center;
  height: 19px;
  padding-left: 5px;
  border-top: 1px solid #b5b8bf;
  background: linear-gradient(#f2f3f6 50%, #e4e6ea 50%);
  font-size: 11px;
}
.rec {
  width: 40px;
}
.nb {
  width: 17px;
  color: #333;
}
.nb svg {
  width: 8px;
  height: 8px;
}
.nb.new svg {
  width: 12px;
}
.recordnav input {
  height: 16px;
  padding: 0 1px;
  border: 1px solid #aaa;
  color: #111;
}
.pos {
  width: 50px;
  margin-right: 2px;
}
.nofilter {
  gap: 2px;
  width: 80px;
  height: 18px;
  margin: 0 5px 0 5px;
  border: 1px solid #b5b8bf;
  border-width: 0 1px;
}
.find-box {
  width: 70px;
}

/* status bar */
.status {
  display: flex;
  justify-content: space-between;
  align-items: center;
  height: 22px;
  padding: 0 1px 0 7px;
  border-top: 1px solid #c2c2c2;
  font-size: 11px;
}
.viewbtns {
  display: flex;
  align-self: stretch;
}
.viewbtns button {
  width: 38px;
}
.viewbtns .on {
  background: #cacaca;
}
.viewbtns svg {
  width: 14px;
  height: 13px;
}

/* taskbar */
.taskbar {
  display: flex;
  height: 40px;
  background: linear-gradient(90deg, #1c1c1c, #434343 30%, #444 72%, #1c1c1c 95%);
  color: #fff;
}
.start {
  width: 48px;
}
.search {
  display: flex;
  align-items: center;
  gap: 11px;
  width: 344px;
  padding-left: 12px;
  border: 1px solid #bbb;
  background: #f2f2f2;
}
.search input {
  flex: 1;
  min-width: 0;
  padding: 0;
  border: 0;
  background: none;
  font-size: 14px;
}
.search input::placeholder {
  color: #333;
}
.apps {
  display: flex;
  gap: 1px;
}
.apps button {
  position: relative;
  width: 48px;
}
.apps svg {
  width: 24px;
  height: 24px;
}
.apps .running::after {
  content: "";
  position: absolute;
  left: 4px;
  right: 4px;
  bottom: 0;
  height: 2px;
  background: #76b9ed;
}
.apps .active {
  background: #6b6b6b;
}
.apps .active::after {
  left: 0;
  right: 0;
}
.tray {
  display: flex;
  align-items: center;
  gap: 8px;
  margin-left: auto;
}
.temp {
  width: 36px;
}
.clock {
  display: flex;
  flex-direction: column;
  align-items: center;
  width: 62px;
  font-family: Roboto, sans-serif;
  font-size: 12px;
  line-height: 18px;
}
.notify {
  position: relative;
  justify-content: flex-start;
  width: 28px;
  height: 40px;
  margin-left: 8px;
}
.badge {
  position: absolute;
  left: 8px;
  top: 19px;
  width: 16px;
  height: 16px;
  border: 1px solid #999;
  border-radius: 50%;
  background: #2a2a2a;
  font-size: 10px;
  line-height: 14px;
}
.peek {
  align-self: stretch;
  width: 5px;
  border-left: 1px solid #777;
}

/* run-time error dialog */
.dialog {
  position: absolute;
  left: 799px;
  top: 187px;
  width: 367px;
  border: 1px solid #6b6f75;
  background: #f0f0f0;
  box-shadow: 0 4px 14px rgba(0, 0, 0, 0.3);
  color: #000;
  font-family: Roboto, sans-serif;
  font-size: 11px;
}
.dialog h2 {
  padding: 0 8px;
  background: #fff;
  font-size: 12px;
  line-height: 30px;
}
.dlg-body {
  padding: 15px 15px 11px 11px;
}
.dlg-body p {
  margin-bottom: 10px;
}
.dlg-actions {
  display: flex;
  justify-content: space-between;
  margin-top: 87px;
  padding-left: 1px;
}
.dlg-actions button {
  width: 73px;
  height: 21px;
  border: 1px solid #adadad;
  background: #e1e1e1;
}
.dlg-actions .default {
  border: 2px solid #0078d7;
}
.dlg-actions button:disabled {
  border-color: #bfbfbf;
  background: #ccc;
  color: #838383;
}
</style>
